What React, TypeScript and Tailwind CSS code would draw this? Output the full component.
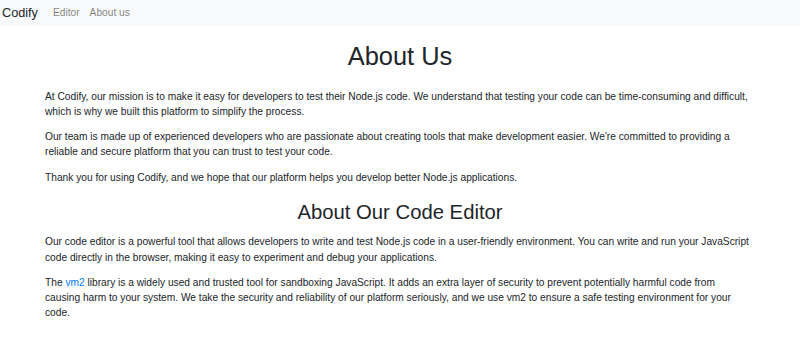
export default function App() {
  return (
    <div className="min-h-[360px] bg-white text-[10.2px] leading-[15.24px] text-[#212529] font-['Liberation_Sans',Arial,sans-serif]">
      <nav className="h-[26px] bg-[#f8f9fa] flex items-center pl-[2px]">
        <a href="#" className="text-[12.7px] leading-[19px] text-[#212529] mr-[10px]">
          Codify
        </a>
        <ul className="flex">
          <li>
            <a href="#" className="px-[5px] text-black/50">
              Editor
            </a>
          </li>
          <li>
            <a href="#" className="px-[5px] text-black/50">
              About us
            </a>
          </li>
        </ul>
      </nav>
      <main className="w-[710px] mx-auto">
        <h1 className="text-[25.4px] leading-[30.5px] text-center mt-[15px] mb-[17px]">About Us</h1>
        <div className="pr-[4px]">
          <p className="mb-[10.16px]">
            At Codify, our mission is to make it easy for developers to test their Node.js code. We understand that
            testing your code can be time-consuming and difficult, which is why we built this platform to simplify the
            process.
          </p>
          <p className="mb-[10.16px]">
            Our team is made up of experienced developers who are passionate about creating tools that make development
            easier. We're committed to providing a reliable and secure platform that you can trust to test your code.
          </p>
          <p className="mb-[10.16px]">
            Thank you for using Codify, and we hope that our platform helps you develop better Node.js applications.
          </p>
        </div>
        <h2 className="text-[20.3px] leading-[24.4px] text-center mt-[15px] mb-[10px]">About Our Code Editor</h2>
        <div className="pr-[4px]">
          <p className="mb-[10.16px]">
            Our code editor is a powerful tool that allows developers to write and test Node.js code in a user-friendly
            environment. You can write and run your JavaScript code directly in the browser, making it easy to
            experiment and debug your applications.
          </p>
          <p className="mb-[10.16px]">
            The{" "}
            <a href="#" className="text-[#007bff]">
              vm2
            </a>{" "}
            library is a widely used and trusted tool for sandboxing JavaScript. It adds an extra layer of security to
            prevent potentially harmful code from causing harm to your system. We take the security and reliability of
            our platform seriously, and we use vm2 to ensure a safe testing environment for your code.
          </p>
        </div>
      </main>
    </div>
  );
}
